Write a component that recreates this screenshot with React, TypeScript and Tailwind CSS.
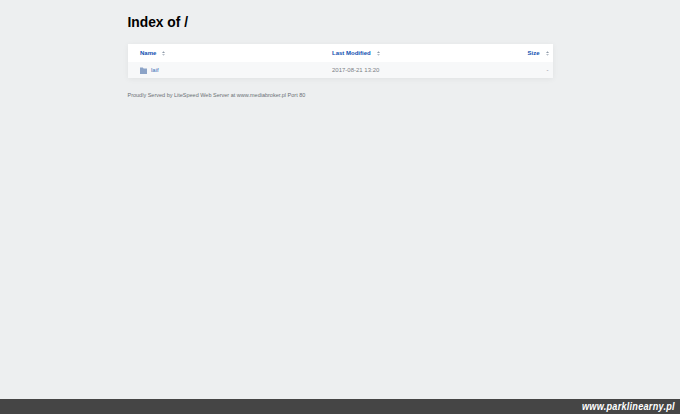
import React from 'react';

const font = { fontFamily: '"Liberation Sans", Arial, sans-serif' };

const SortIcon: React.FC = () => (
  <svg width="3" height="5" viewBox="0 0 4 6" className="inline-block ml-[6px] align-[-1px]">
    <path d="M2 0 L4 2.4 L0 2.4 Z" fill="#8f9aa8" />
    <path d="M2 6 L4 3.6 L0 3.6 Z" fill="#b4bcc6" />
  </svg>
);

const FolderIcon: React.FC = () => (
  <svg width="7" height="7" viewBox="0 0 7 7" className="w-[7px] h-[7px]" preserveAspectRatio="none">
    <path d="M0 0.5 H2.8 L3.6 1.4 H7 V7 H0 Z" fill="#8ca3c7" />
  </svg>
);

export default function App() {
  return (
    <div style={font} className="w-[680px] h-[414px] overflow-hidden flex flex-col bg-[#edeff0]">
      <div className="flex-1 w-[425px] ml-[127.5px] pt-[14px]">
        <h1 className="text-[13.8px] leading-[18px] font-bold text-black">Index of /</h1>
        <div className="mt-[12px] bg-white shadow-[0_1px_6px_rgba(0,0,0,0.06)]">
          <div className="h-[18px] flex items-center pl-[12.5px] pr-[4px] text-[6px] font-bold text-[#0f4fb0]">
            <div className="w-[192px]">Name<SortIcon /></div>
            <div className="flex-1">Last Modified<SortIcon /></div>
            <div>Size<SortIcon /></div>
          </div>
          <div className="h-[16px] flex items-center pl-[12.5px] pr-[4px] text-[6px] bg-[#f7f8f9]">
            <div className="w-[192px] flex items-center gap-[4px] text-[#3d6fb8]">
              <FolderIcon />
              <span>laif</span>
            </div>
            <div className="flex-1 text-[#7b7f85]">2017-08-21 13:20</div>
            <div className="text-[#7b7f85]">-</div>
          </div>
        </div>
        <p className="mt-[13px] text-[5.5px] leading-[8px] text-[#6b6f75]">
          Proudly Served by LiteSpeed Web Server at www.mediabroker.pl Port 80
        </p>
      </div>
      <div className="h-[15px] bg-[#454545] flex items-center justify-end pr-[5px]">
        <span className="inline-block text-[11px] font-bold italic text-white tracking-[0.3px] origin-right scale-x-[0.83]">www.parklinearny.pl</span>
      </div>
    </div>
  );
}
